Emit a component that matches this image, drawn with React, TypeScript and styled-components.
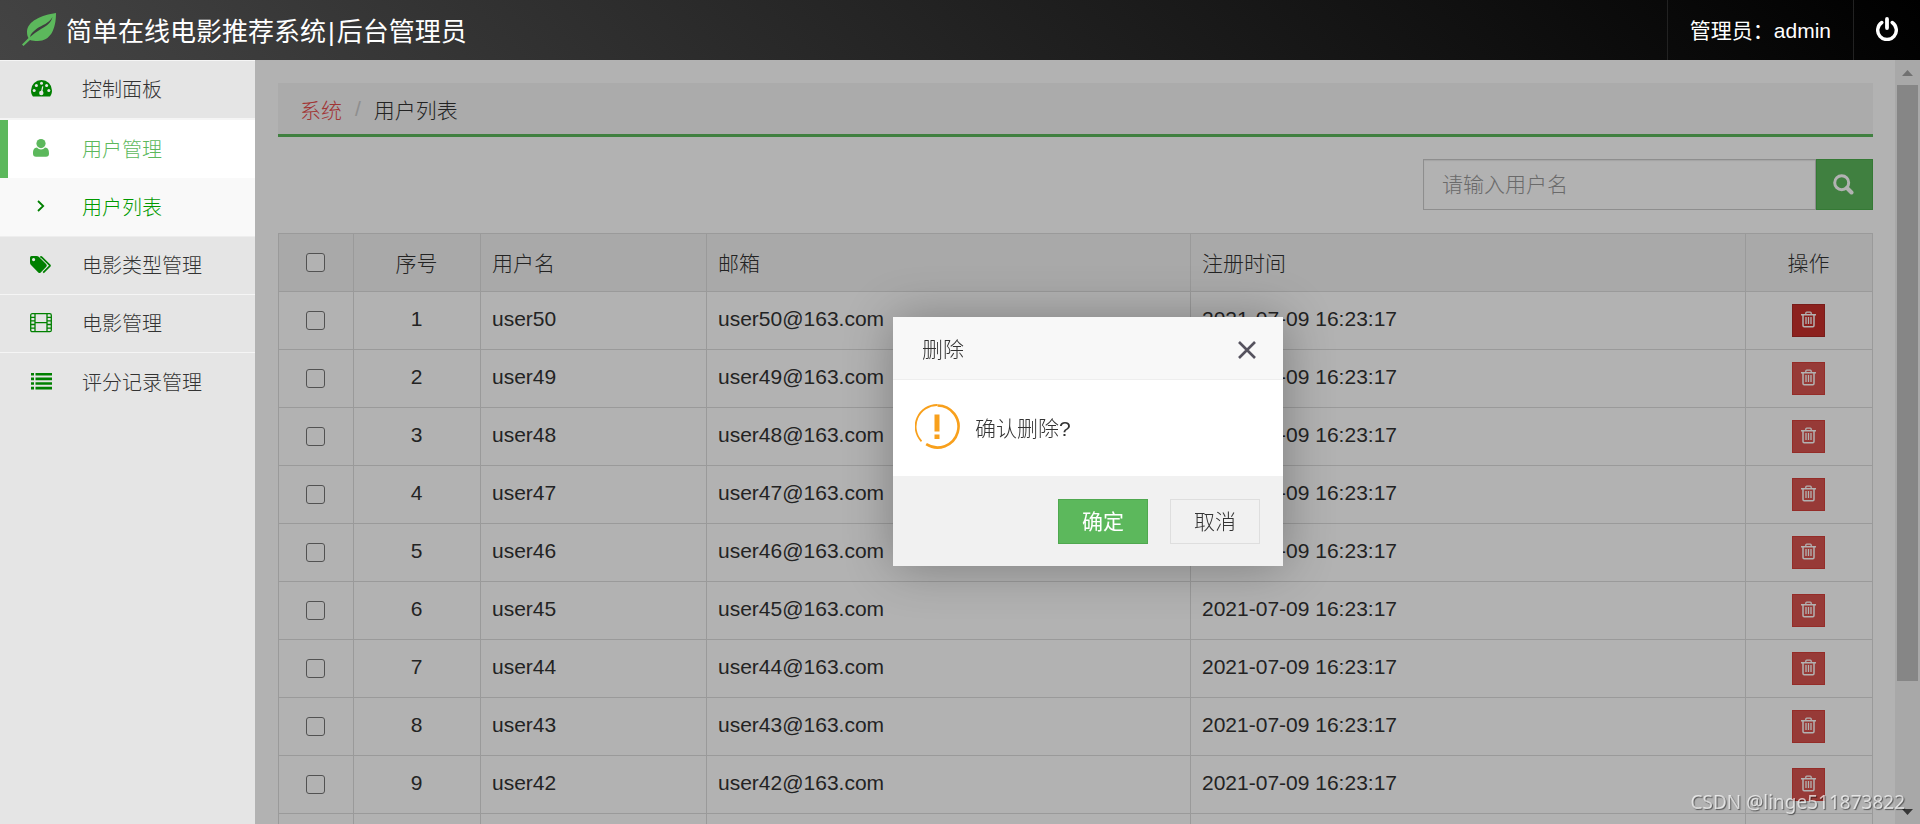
import React from "react";
import styled, { createGlobalStyle } from "styled-components";

const Global = createGlobalStyle`
  *, *::before, *::after { box-sizing: border-box; }
  body { margin: 0; font-family: "Liberation Sans", "Noto Sans CJK SC", sans-serif; font-weight: 300; font-size: 21px; color: #333; }
  button, input { font: inherit; border-radius: 0; }
  a { text-decoration: none; color: inherit; }
`;

const Page = styled.div`
  display: flex;
  flex-direction: column;
  height: 100vh;
  overflow: hidden;
`;
const Header = styled.header`
  display: flex;
  align-items: center;
  height: 60px;
  flex: none;
  padding-left: 22px;
  color: #fff;
  background: linear-gradient(45deg, #444, #000);
`;
const Brand = styled.h1`
  display: flex;
  align-items: center;
  gap: 10px;
  margin: 0 auto 0 0;
  padding-bottom: 2px;
  font-size: 26px;
  font-weight: 400;
  svg { color: #5cb85c; }
`;
const Divider = styled.span`
  margin: 0 2px;
`;
const HeaderLink = styled.a`
  display: flex;
  align-items: center;
  height: 60px;
  padding: 0 22px 2px;
  border-left: 1px solid #222;
  font-weight: 400;
`;
const Body = styled.div`
  display: flex;
  flex: 1;
  min-height: 0;
`;
const Sidebar = styled.nav`
  width: 255px;
  flex: none;
  background: #e5e5e5;
  border-top: 1px solid #f5f5f5;
  font-size: 20px;
`;
const Group = styled.div`
  border-top: 1px solid #f5f5f5;
  border-bottom: 1px solid #eee;
`;
const MenuItem = styled.a<{ $kind?: "active" | "sub" }>`
  display: flex;
  align-items: center;
  height: 58px;
  padding: 0 0 2px 30px;
  border-bottom: ${(p) => (p.$kind ? "none" : "1px solid #f5f5f5")};
  box-shadow: ${(p) => (p.$kind === "active" ? "inset 8px 0 0 #5cb85c" : "none")};
  background: ${(p) => (p.$kind === "active" ? "#fff" : p.$kind === "sub" ? "#f9f9f9" : "none")};
  color: ${(p) => (p.$kind === "active" ? "#5cb85c" : p.$kind === "sub" ? "#090" : "#333")};
  &:last-child { border-bottom: none; }
  svg { color: ${(p) => (p.$kind === "active" ? "#5cb85c" : "green")}; }
`;
const IconSlot = styled.span`
  display: flex;
  justify-content: center;
  width: 22px;
  margin-right: 30px;
`;
const Content = styled.div`
  position: relative;
  display: flex;
  flex: 1;
  min-width: 0;
`;
const Main = styled.main`
  flex: 1;
  min-width: 0;
  padding: 23px 22px 0 23px;
  overflow: hidden;
`;
const Breadcrumb = styled.nav`
  display: flex;
  align-items: center;
  gap: 13px;
  height: 54px;
  padding-left: 22px;
  background: #f5f5f5;
  border-bottom: 3px solid #5cb85c;
  a { color: #e74c4c; }
  i { color: #ccc; font-style: normal; }
`;
const Search = styled.form`
  display: flex;
  width: 450px;
  height: 51px;
  margin: 22px 0 23px auto;
`;
const SearchInput = styled.input`
  flex: 1;
  min-width: 0;
  padding: 0 18px;
  border: 1px solid #ccc;
  box-shadow: inset 0 1px 1px rgba(0, 0, 0, 0.08);
  &::placeholder { color: #999; opacity: 1; }
`;
const SearchButton = styled.button`
  display: flex;
  align-items: center;
  justify-content: center;
  width: 57px;
  padding: 0 3px 0 0;
  color: #fff;
  background: #5cb85c;
  border: 1px solid #4cae4c;
`;
const Table = styled.table`
  width: 100%;
  table-layout: fixed;
  border-collapse: collapse;
  tr { height: 58px; }
  thead { background: #f2f2f2; }
`;
const Col = styled.col<{ $w?: number }>`
  width: ${(p) => (p.$w ? p.$w + "px" : "auto")};
`;
const cell = (center?: boolean) => `
  border: 1px solid #ddd;
  font-weight: 300;
  line-height: 24px;
  text-align: ${center ? "center" : "left"};
`;
const Th = styled.th<{ $center?: boolean }>`
  ${(p) => cell(p.$center)}
  padding: 2px 12px 0 11px;
`;
const Td = styled.td<{ $center?: boolean }>`
  ${(p) => cell(p.$center)}
  padding: 0 12px 4px 11px;
`;
const ControlTd = styled.td`
  ${cell(true)}
  padding: 0 12px 1px 11px;
`;
const Check = styled.input`
  display: block;
  appearance: none;
  width: 19px;
  height: 19px;
  margin: 0 auto;
  border: 1px solid #767676;
  border-radius: 3px;
  background: #fff;
`;
const DeleteButton = styled.button<{ $active?: boolean }>`
  display: flex;
  align-items: center;
  justify-content: center;
  width: 33px;
  height: 33px;
  margin: 0 auto;
  padding: 0 0 2px;
  color: #fff;
  background: ${(p) => (p.$active ? "#c9302c" : "#d9534f")};
  border: 1px solid ${(p) => (p.$active ? "#ac2925" : "#d43f3a")};
`;
const Scrollbar = styled.div`
  display: flex;
  flex-direction: column;
  align-items: center;
  justify-content: space-between;
  width: 25px;
  padding: 10px 0 9px;
  background: #f1f1f1;
`;
const Thumb = styled.div`
  width: 21px;
  height: 80%;
  margin: 9px 0 auto;
  background: #c1c1c1;
`;
const Mask = styled.div`
  position: absolute;
  inset: 0;
  background: rgba(0, 0, 0, 0.3);
`;
const Dialog = styled.section`
  position: fixed;
  top: 317px;
  left: calc(50% - 67px);
  width: 390px;
  border-radius: 2px;
  background: #fff;
  box-shadow: 1px 1px 50px rgba(0, 0, 0, 0.3);
`;
const DialogTitle = styled.header`
  display: flex;
  align-items: center;
  justify-content: space-between;
  height: 63px;
  padding: 0 26px 0 29px;
  background: #f8f8f8;
  border-bottom: 1px solid #eee;
  h2 { margin: 0; font-size: 21px; font-weight: 300; }
`;
const CloseButton = styled.button`
  display: flex;
  padding: 4px 0 0;
  border: 0;
  background: none;
`;
const DialogBody = styled.div`
  display: flex;
  align-items: center;
  gap: 15px;
  height: 96px;
  padding: 0 22px 3px;
  p { margin: 0; }
`;
const DialogActions = styled.footer`
  display: flex;
  align-items: center;
  justify-content: flex-end;
  gap: 22px;
  height: 90px;
  padding: 0 23px;
  background: #f1f1f1;
`;
const ActionButton = styled.button<{ $primary?: boolean }>`
  width: 90px;
  height: 45px;
  padding: 0 0 3px;
  font-weight: ${(p) => (p.$primary ? 400 : 300)};
  color: ${(p) => (p.$primary ? "#fff" : "#333")};
  background: ${(p) => (p.$primary ? "#5cb85c" : "#f1f1f1")};
  border: 1px solid ${(p) => (p.$primary ? "#4fa84f" : "#dedede")};
`;
const Watermark = styled.div`
  position: fixed;
  right: 15px;
  bottom: 8px;
  font: 400 19px/28px "Noto Sans", sans-serif;
  color: rgba(255, 255, 255, 0.7);
  text-shadow: 1px 1px 1px rgba(0, 0, 0, 0.5);
`;

const LeafIcon = () => (
  <svg width="34" height="33" viewBox="0 0 34 33" aria-hidden="true">
    <path fill="currentColor" d="M34 0C20 2 5 8 5 19c0 2.500.5 4.500 1.500 6L0 31.500 1.500 33 8 27c2 .8 5 1 8 1C28 28 34 17 34 0Z" />
    <path fill="#3f3f3f" d="M30.500 4C27 10.500 20 12 15 15.500c-4 3-6.500 5.500-7 8.500 4-3 6.500-5.500 11-8C25 13 29.500 9 30.500 4Z" />
  </svg>
);
const PowerIcon = () => (
  <svg width="22" height="24" viewBox="0 0 22 24" fill="none" stroke="currentColor" strokeLinecap="round" aria-hidden="true">
    <path d="M5.800 5.500a9.300 9.300 0 1 0 10.400 0" strokeWidth="3.400" />
    <path d="M11 2v9" strokeWidth="3.800" />
  </svg>
);
const DashboardIcon = () => (
  <svg width="21" height="17" viewBox="0 0 21 17" aria-hidden="true">
    <path fill="currentColor" d="M10.500 0A10.500 10.500 0 0 0 0 10.500c0 2 .5 3.900 1.600 5.500q.3.500.9.500h16q.6 0 .9-.5c1.100-1.600 1.600-3.500 1.600-5.500A10.500 10.500 0 0 0 10.500 0Z" />
    <g fill="#e5e5e5">
      <circle cx="3.200" cy="10.500" r="1.500" /><circle cx="5.400" cy="5.400" r="1.500" /><circle cx="10.500" cy="3.200" r="1.500" />
      <circle cx="15.600" cy="5.400" r="1.500" /><circle cx="17.800" cy="10.500" r="1.500" /><circle cx="10.300" cy="13" r="2.200" />
      <path d="M9.700 12.500L11.200 6.300l1.100.3L11.200 13Z" />
    </g>
  </svg>
);
const UserIcon = () => (
  <svg width="16" height="18" viewBox="0 0 16 18" fill="currentColor" aria-hidden="true">
    <circle cx="8" cy="4.600" r="4.600" />
    <path d="M0 14.500C0 11 1 8.700 4 8.500c1 1.200 2.500 1.900 4 1.900s3-.7 4-1.900c3 .2 4 2.500 4 6 0 2.300-1 3.200-3 3.200H3c-2 0-3-.9-3-3.200Z" />
  </svg>
);
const AngleIcon = () => (
  <svg width="8" height="12" viewBox="0 0 8 12" fill="none" stroke="currentColor" strokeWidth="1.800" aria-hidden="true">
    <path d="M1 1l5.200 5L1 11" />
  </svg>
);
const TagsIcon = () => (
  <svg width="22" height="18" viewBox="0 0 22 18" aria-hidden="true">
    <path fill="currentColor" fillRule="evenodd" d="M0 1.500Q0 0 1.500 0H6.500Q8 0 9 1L16.300 8.300q1.100 1.200 0 2.400l-5.600 5.700q-1.200 1-2.400 0L1 9Q0 8 0 6.500ZM3.600 2a1.600 1.600 0 1 0 0 3.200 1.600 1.600 0 0 0 0-3.200Z" />
    <path fill="none" stroke="currentColor" strokeWidth="1.700" d="M10.300.8q1 0 1.800.8L19.700 9.200q.5.500 0 1L13.200 16.600" />
  </svg>
);
const FilmIcon = () => (
  <svg width="22" height="20" viewBox="0 0 22 20" fill="none" stroke="currentColor" strokeWidth="1.300" aria-hidden="true">
    <rect x=".7" y=".7" width="20.600" height="18" rx="1.500" />
    <path d="M5 1v18M17 1v18M5 9.700h12M1 4.300h4M1 7.900h4M1 11.500h4M1 15.100h4M17 4.300h4M17 7.900h4M17 11.500h4M17 15.100h4" />
  </svg>
);
const ListIcon = () => (
  <svg width="21" height="17" viewBox="0 0 21 17" fill="currentColor" aria-hidden="true">
    <path d="M0 0h3v2.600H0zM4.500 0H21v2.600H4.500zM0 4.600h3v2.600H0zM4.500 4.600H21v2.600H4.500zM0 9.200h3v2.600H0zM4.500 9.200H21v2.600H4.500zM0 13.800h3v2.600H0zM4.500 13.800H21v2.600H4.500z" />
  </svg>
);
const SearchIcon = () => (
  <svg width="21" height="21" viewBox="0 0 21 21" fill="none" stroke="currentColor" aria-hidden="true">
    <circle cx="8.700" cy="8.700" r="7" strokeWidth="3" />
    <path d="M14 14l4.500 4.500" strokeWidth="4" strokeLinecap="round" />
  </svg>
);
const TrashIcon = () => (
  <svg width="15" height="17" viewBox="0 0 15 17" fill="none" stroke="currentColor" aria-hidden="true">
    <path d="M0 3.800h15M2 4v10.500q0 1.200 1.200 1.200h8.600q1.200 0 1.200-1.200V4" strokeWidth="1.500" />
    <path d="M4.800 3.500V2q0-.9.9-.9h3.600q.9 0 .9.900v1.500M5 6v7M7.500 6v7M10 6v7" strokeWidth="1.300" />
  </svg>
);
const WarnIcon = () => (
  <svg width="45" height="45" viewBox="0 0 45 45" fill="none" stroke="#f8a01c" aria-hidden="true">
    <path d="M6.500 37.300A21.500 21.500 0 0 1 22.500 1" strokeWidth="1.800" />
    <path d="M22.500 1.500a21 21 0 1 1-11.300 38.700" strokeWidth="2.600" />
    <path d="M22 10.500v17M22 30.500v4.500" strokeWidth="5" />
  </svg>
);

const users = Array.from({ length: 9 }, (_, i) => ({ no: i + 1, name: "user" + (50 - i) }));

export default function App() {
  return (
    <Page>
      <Global />
      <Header>
        <Brand><LeafIcon /><span>简单在线电影推荐系统<Divider>|</Divider>后台管理员</span></Brand>
        <HeaderLink href="#">管理员：admin</HeaderLink>
        <HeaderLink href="#" aria-label="退出"><PowerIcon /></HeaderLink>
      </Header>
      <Body>
        <Sidebar>
          <MenuItem href="#"><IconSlot><DashboardIcon /></IconSlot>控制面板</MenuItem>
          <Group>
            <MenuItem href="#" $kind="active"><IconSlot><UserIcon /></IconSlot>用户管理</MenuItem>
            <MenuItem href="#" $kind="sub"><IconSlot><AngleIcon /></IconSlot>用户列表</MenuItem>
          </Group>
          <MenuItem href="#"><IconSlot><TagsIcon /></IconSlot>电影类型管理</MenuItem>
          <MenuItem href="#"><IconSlot><FilmIcon /></IconSlot>电影管理</MenuItem>
          <MenuItem href="#"><IconSlot><ListIcon /></IconSlot>评分记录管理</MenuItem>
        </Sidebar>
        <Content>
          <Main>
            <Breadcrumb><a href="#">系统</a><i>/</i><span>用户列表</span></Breadcrumb>
            <Search>
              <SearchInput aria-label="用户名" placeholder="请输入用户名" />
              <SearchButton type="button" aria-label="搜索"><SearchIcon /></SearchButton>
            </Search>
            <Table>
              <colgroup>
                <Col $w={75} /><Col $w={127} /><Col $w={226} /><Col $w={484} /><Col /><Col $w={127} />
              </colgroup>
              <thead>
                <tr>
                  <ControlTd as="th"><Check type="checkbox" aria-label="全选" /></ControlTd>
                  <Th $center>序号</Th><Th>用户名</Th><Th>邮箱</Th><Th>注册时间</Th><Th $center>操作</Th>
                </tr>
              </thead>
              <tbody>
                {users.map((u) => (
                  <tr key={u.no}>
                    <ControlTd><Check type="checkbox" aria-label={u.name} /></ControlTd>
                    <Td $center>{u.no}</Td>
                    <Td>{u.name}</Td>
                    <Td>{u.name}@163.com</Td>
                    <Td>2021-07-09 16:23:17</Td>
                    <ControlTd><DeleteButton $active={u.no === 1} aria-label="删除"><TrashIcon /></DeleteButton></ControlTd>
                  </tr>
                ))}
                <tr><Td /><Td /><Td /><Td /><Td /><Td /></tr>
              </tbody>
            </Table>
          </Main>
          <Scrollbar>
            <svg width="11" height="6" aria-hidden="true"><path d="M0 6L5.500 0L11 6Z" fill="#a3a3a3" /></svg>
            <Thumb />
            <svg width="11" height="6" aria-hidden="true"><path d="M0 0L5.500 6L11 0Z" fill="#505050" /></svg>
          </Scrollbar>
          <Mask />
        </Content>
      </Body>
      <Dialog role="dialog" aria-labelledby="dlg-title">
        <DialogTitle>
          <h2 id="dlg-title">删除</h2>
          <CloseButton aria-label="关闭">
            <svg width="20" height="20" viewBox="0 0 20 20" stroke="#55525e" strokeWidth="2.600" aria-hidden="true"><path d="M2 2L18 18M18 2L2 18" /></svg>
          </CloseButton>
        </DialogTitle>
        <DialogBody><WarnIcon /><p>确认删除?</p></DialogBody>
        <DialogActions>
          <ActionButton $primary>确定</ActionButton>
          <ActionButton>取消</ActionButton>
        </DialogActions>
      </Dialog>
      <Watermark>CSDN @linge511873822</Watermark>
    </Page>
  );
}
